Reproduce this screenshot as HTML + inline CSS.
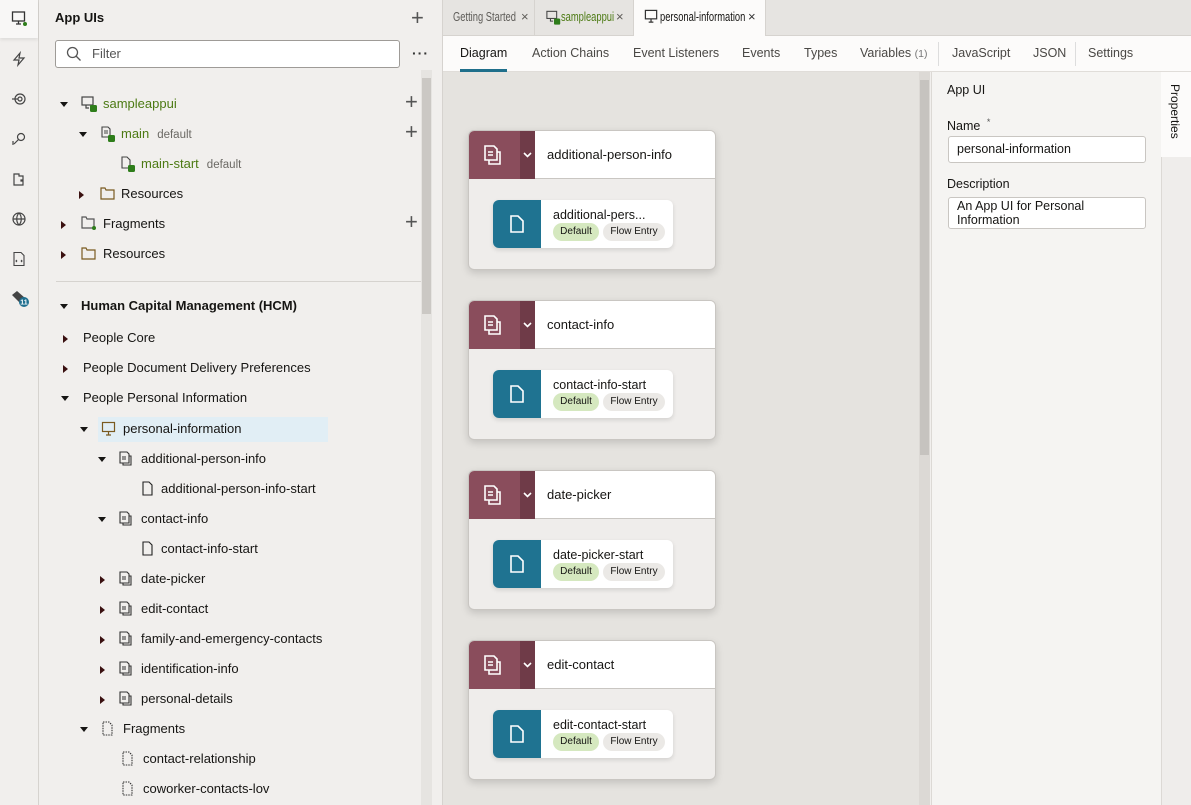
<!DOCTYPE html>
<html><head><meta charset="utf-8"><style>
*{box-sizing:border-box;margin:0;padding:0}
body{width:1191px;height:805px;overflow:hidden;font-family:"Liberation Sans",sans-serif;font-size:13px;color:#161513;background:#f1efed;position:relative}
.abs{position:absolute}
.rail{left:0;top:0;width:39px;height:805px;background:#f1efed;border-right:1px solid #d6d3cf}
.rail .ic{position:absolute;left:11px;width:16px;height:16px}
.tree{left:39px;top:0;width:404px;height:805px;background:#f1efed;border-right:1px solid #d6d3cf}
.row{position:absolute;height:22px;line-height:22px;white-space:nowrap;font-size:13px;color:#161513}
.tri{display:inline-block;width:0;height:0;border-left:4px solid transparent;border-right:4px solid transparent;border-top:5px solid #161513;vertical-align:middle}
.tri.r{border-top:4px solid transparent;border-bottom:4px solid transparent;border-left:5px solid #3a1010;border-right:0}
.plus{position:absolute;font-size:22px;color:#555;font-weight:300;line-height:20px}
.g{color:#4c7a13}
.sub{color:#6b6964;font-size:11.5px;margin-left:8px}
.tabs{left:443px;top:0;width:748px;height:36px;background:#e6e4e1;border-bottom:1px solid #d6d3cf}
.tab{position:absolute;top:0;height:36px;border-right:1px solid #d6d3cf}
.tl{position:absolute;top:0;line-height:34px;font-size:13px;color:#5e5c58;white-space:nowrap;transform:scaleX(.72);transform-origin:0 50%}
.tx{position:absolute;top:0;line-height:34px;font-size:13px;color:#5e5c58}
.subtabs{left:443px;top:36px;width:748px;height:36px;background:#fcfbfa;border-bottom:1px solid #e0ddd9}
.st{position:absolute;top:0;line-height:35px;font-size:12.5px;color:#4a4845;white-space:nowrap}
.canvas{left:443px;top:72px;width:477px;height:733px;background:#e5e3df}
.card{position:absolute;left:25px;width:248px;height:140px;background:#efedeb;border:1px solid #c9c6c2;border-radius:6px;box-shadow:0 3px 8px rgba(0,0,0,.15);overflow:hidden}
.ch{position:absolute;left:0;top:0;width:100%;height:48px;background:#fff;border-bottom:1px solid #c9c6c2}
.mar{position:absolute;left:0;top:0;width:51px;height:48px;background:#8a4d5c}
.chev{position:absolute;left:51px;top:0;width:15px;height:48px;background:#6f3b48}
.ct{position:absolute;left:78px;top:0;line-height:48px;font-size:13px;white-space:nowrap}
.inner{position:absolute;left:24px;top:69px;width:180px;height:48px;background:#fff;border-radius:6px;box-shadow:0 2px 5px rgba(0,0,0,.12);overflow:hidden}
.teal{position:absolute;left:0;top:0;width:48px;height:48px;background:#1f7391}
.it{position:absolute;left:60px;top:8px;font-size:12.5px;white-space:nowrap}
.pill{position:absolute;top:23px;height:18px;line-height:18px;font-size:10px;border-radius:9px;text-align:center}
.props{left:931px;top:72px;width:230px;height:733px;background:#f5f4f2;border-left:1px solid #dcd9d5}
.inp{position:absolute;left:16px;width:198px;background:#fff;border:1px solid #c9c6c2;border-radius:3px;font-size:13px;padding:0 8px}
</style></head><body>

<div class="abs rail">
  <div class="abs" style="left:0;top:0;width:38px;height:38px;background:#f8f7f6;box-shadow:0 2px 3px rgba(0,0,0,.08)"></div>
  <svg class="ic" style="top:10px" viewBox="0 0 16 16" fill="none" stroke="#333" stroke-width="1.3"><rect x="1.5" y="2" width="12" height="9"/><path d="M7.5 11v3M5 14h5"/><circle cx="14" cy="14" r="2" fill="#2e7d1a" stroke="none"/></svg>
  <svg class="ic" style="top:51px" viewBox="0 0 16 16" fill="none" stroke="#444" stroke-width="1.2"><path d="M9 2L3 9h5l-1 5 6-7H8z"/></svg>
  <svg class="ic" style="top:91px" viewBox="0 0 16 16" fill="none" stroke="#444" stroke-width="1.2"><circle cx="9" cy="8" r="5"/><circle cx="9" cy="8" r="2"/><path d="M1 8h6"/></svg>
  <svg class="ic" style="top:131px" viewBox="0 0 16 16" fill="none" stroke="#444" stroke-width="1.2"><circle cx="10" cy="6" r="3.5"/><path d="M7.5 8.5L3 13M2 10v4"/></svg>
  <svg class="ic" style="top:171px" viewBox="0 0 16 16" fill="none" stroke="#444" stroke-width="1.2"><path d="M3 3h5v2h4v4h-2v1h2v4H3z"/></svg>
  <svg class="ic" style="top:211px" viewBox="0 0 16 16" fill="none" stroke="#444" stroke-width="1.2"><circle cx="8" cy="8" r="6"/><path d="M2 8h12M8 2c-3 3-3 9 0 12M8 2c3 3 3 9 0 12"/></svg>
  <svg class="ic" style="top:251px" viewBox="0 0 16 16" fill="none" stroke="#444" stroke-width="1.1"><path d="M3 1.5h7l3 3v10H3z"/><path d="M6 9l-1 1 1 1M10 9l1 1-1 1"/></svg>
  <svg class="abs" style="left:10px;top:290px" width="22" height="18" viewBox="0 0 22 18"><path d="M2 5l5-4 8 7-5 5z" fill="#444"/><circle cx="14" cy="12" r="5" fill="#1f6f8f"/><text x="14" y="14.5" font-size="7" fill="#fff" text-anchor="middle" font-family="Liberation Sans" font-weight="bold">11</text></svg>
</div>

<div class="abs tree">
  <div class="abs" style="left:16px;top:10px;font-weight:bold;font-size:13px">App UIs</div>
  <div class="plus" style="left:372px;top:8px">+</div>
  <div class="abs" style="left:16px;top:40px;width:345px;height:28px;background:#fff;border:1px solid #9e9b97;border-radius:3px">
    <svg class="abs" style="left:10px;top:5px" width="16" height="16" viewBox="0 0 16 16" fill="none" stroke="#555" stroke-width="1.3"><circle cx="6.5" cy="6.5" r="5"/><path d="M10 10l4.5 4.5"/></svg>
    <span class="abs" style="left:36px;top:5px;color:#555">Filter</span>
  </div>
  <div class="abs" style="left:373px;top:45px;font-size:14px;letter-spacing:1px;color:#333;font-weight:bold">···</div>
  <div class="abs" style="left:382px;top:70px;width:11px;height:735px;background:#e6e4e1"></div>
  <div class="abs" style="left:383px;top:78px;width:9px;height:236px;background:#cbc8c4"></div>

  <div class="row" style="left:21px;top:93px"><span class="tri"></span></div>
  <svg class="abs" style="left:42px;top:96px" width="18" height="17" viewBox="0 0 18 17" fill="none" stroke="#444" stroke-width="1.2"><rect x="1" y="1" width="11" height="8"/><path d="M5 9v3h3"/><rect x="9" y="9" width="7" height="7" rx="1.5" fill="#2e7d1a" stroke="none"/></svg>
  <div class="row g" style="left:64px;top:93px">sampleappui</div>
  <div class="plus" style="left:366px;top:92px">+</div>

  <div class="row" style="left:40px;top:123px"><span class="tri"></span></div>
  <svg class="abs" style="left:61px;top:126px" width="17" height="17" viewBox="0 0 17 17" fill="none" stroke="#444" stroke-width="1.1"><path d="M2 1h6l2 2v8H2zM4 5h4M4 7h4"/><rect x="8" y="9" width="7" height="7" rx="1.5" fill="#2e7d1a" stroke="none"/></svg>
  <div class="row" style="left:82px;top:123px"><span class="g">main</span><span class="sub">default</span></div>
  <div class="plus" style="left:366px;top:122px">+</div>

  <svg class="abs" style="left:81px;top:156px" width="17" height="17" viewBox="0 0 17 17" fill="none" stroke="#444" stroke-width="1.1"><path d="M2 1h5l3 3v8H2z"/><rect x="8" y="9" width="7" height="7" rx="1.5" fill="#2e7d1a" stroke="none"/></svg>
  <div class="row" style="left:102px;top:153px"><span class="g">main-start</span><span class="sub">default</span></div>

  <div class="row" style="left:40px;top:183px"><span class="tri r"></span></div>
  <svg class="abs" style="left:61px;top:187px" width="15" height="13" viewBox="0 0 15 13" fill="none" stroke="#7a5a20" stroke-width="1.2"><path d="M1 1h4l1 2h8v9H1z"/></svg>
  <div class="row" style="left:82px;top:183px">Resources</div>

  <div class="row" style="left:22px;top:213px"><span class="tri r"></span></div>
  <svg class="abs" style="left:42px;top:216px" width="16" height="15" viewBox="0 0 16 15" fill="none" stroke="#555" stroke-width="1.2"><path d="M1 1h4l1 2h7v9H1z"/><circle cx="13" cy="12" r="2" fill="#2e7d1a" stroke="none"/></svg>
  <div class="row" style="left:64px;top:213px">Fragments</div>
  <div class="plus" style="left:366px;top:212px">+</div>

  <div class="row" style="left:22px;top:243px"><span class="tri r"></span></div>
  <svg class="abs" style="left:42px;top:247px" width="15" height="13" viewBox="0 0 15 13" fill="none" stroke="#7a5a20" stroke-width="1.2"><path d="M1 1h4l1 2h8v9H1z"/></svg>
  <div class="row" style="left:64px;top:243px">Resources</div>

  <div class="abs" style="left:17px;top:281px;width:365px;height:1px;background:#d6d3cf"></div>

  <div class="row" style="left:21px;top:295px"><span class="tri"></span></div>
  <div class="row" style="left:42px;top:295px;font-weight:bold">Human Capital Management (HCM)</div>
  <div class="row" style="left:24px;top:327px"><span class="tri r"></span></div>
  <div class="row" style="left:44px;top:327px">People Core</div>
  <div class="row" style="left:24px;top:357px"><span class="tri r"></span></div>
  <div class="row" style="left:44px;top:357px">People Document Delivery Preferences</div>
  <div class="row" style="left:22px;top:387px"><span class="tri"></span></div>
  <div class="row" style="left:44px;top:387px">People Personal Information</div>

  <div class="abs" style="left:59px;top:417px;width:230px;height:25px;background:#e1eef5"></div>
  <div class="row" style="left:41px;top:418px"><span class="tri"></span></div>
  <svg class="abs" style="left:62px;top:421px" width="16" height="16" viewBox="0 0 16 16" fill="none" stroke="#7a5a20" stroke-width="1.2"><rect x="1.5" y="1.5" width="12" height="9"/><path d="M7.5 10.5v3M5 14h5"/></svg>
  <div class="row" style="left:84px;top:418px">personal-information</div>

  <div class="row" style="left:59px;top:448px"><span class="tri"></span></div>
  <svg class="abs" style="left:80px;top:451px" width="14" height="16" viewBox="0 0 14 16" fill="none" stroke="#333" stroke-width="1.1"><path d="M1 1h7l2 2v9H1zM3 6h4M3 8h4M4 12v2h8V5h-2"/></svg>
  <div class="row" style="left:102px;top:448px">additional-person-info</div>
  <svg class="abs" style="left:103px;top:481px" width="12" height="15" viewBox="0 0 12 15" fill="none" stroke="#222" stroke-width="1.1"><path d="M1 1h6l3 3v10H1z"/></svg>
  <div class="row" style="left:122px;top:478px">additional-person-info-start</div>

  <div class="row" style="left:59px;top:508px"><span class="tri"></span></div>
  <svg class="abs" style="left:80px;top:511px" width="14" height="16" viewBox="0 0 14 16" fill="none" stroke="#333" stroke-width="1.1"><path d="M1 1h7l2 2v9H1zM3 6h4M3 8h4M4 12v2h8V5h-2"/></svg>
  <div class="row" style="left:102px;top:508px">contact-info</div>
  <svg class="abs" style="left:103px;top:541px" width="12" height="15" viewBox="0 0 12 15" fill="none" stroke="#222" stroke-width="1.1"><path d="M1 1h6l3 3v10H1z"/></svg>
  <div class="row" style="left:122px;top:538px">contact-info-start</div>

  <div class="row" style="left:61px;top:568px"><span class="tri r"></span></div>
  <svg class="abs" style="left:80px;top:571px" width="14" height="16" viewBox="0 0 14 16" fill="none" stroke="#333" stroke-width="1.1"><path d="M1 1h7l2 2v9H1zM3 6h4M3 8h4M4 12v2h8V5h-2"/></svg>
  <div class="row" style="left:102px;top:568px">date-picker</div>
  <div class="row" style="left:61px;top:598px"><span class="tri r"></span></div>
  <svg class="abs" style="left:80px;top:601px" width="14" height="16" viewBox="0 0 14 16" fill="none" stroke="#333" stroke-width="1.1"><path d="M1 1h7l2 2v9H1zM3 6h4M3 8h4M4 12v2h8V5h-2"/></svg>
  <div class="row" style="left:102px;top:598px">edit-contact</div>
  <div class="row" style="left:61px;top:628px"><span class="tri r"></span></div>
  <svg class="abs" style="left:80px;top:631px" width="14" height="16" viewBox="0 0 14 16" fill="none" stroke="#333" stroke-width="1.1"><path d="M1 1h7l2 2v9H1zM3 6h4M3 8h4M4 12v2h8V5h-2"/></svg>
  <div class="row" style="left:102px;top:628px">family-and-emergency-contacts</div>
  <div class="row" style="left:61px;top:658px"><span class="tri r"></span></div>
  <svg class="abs" style="left:80px;top:661px" width="14" height="16" viewBox="0 0 14 16" fill="none" stroke="#333" stroke-width="1.1"><path d="M1 1h7l2 2v9H1zM3 6h4M3 8h4M4 12v2h8V5h-2"/></svg>
  <div class="row" style="left:102px;top:658px">identification-info</div>
  <div class="row" style="left:61px;top:688px"><span class="tri r"></span></div>
  <svg class="abs" style="left:80px;top:691px" width="14" height="16" viewBox="0 0 14 16" fill="none" stroke="#333" stroke-width="1.1"><path d="M1 1h7l2 2v9H1zM3 6h4M3 8h4M4 12v2h8V5h-2"/></svg>
  <div class="row" style="left:102px;top:688px">personal-details</div>

  <div class="row" style="left:41px;top:718px"><span class="tri"></span></div>
  <svg class="abs" style="left:63px;top:721px" width="12" height="15" viewBox="0 0 12 15" fill="none" stroke="#333" stroke-width="1.1" stroke-dasharray="1.5 1"><path d="M1 1h6l3 3v10H1z"/></svg>
  <div class="row" style="left:84px;top:718px">Fragments</div>
  <svg class="abs" style="left:83px;top:751px" width="12" height="15" viewBox="0 0 12 15" fill="none" stroke="#333" stroke-width="1.1" stroke-dasharray="1.5 1"><path d="M1 1h6l3 3v10H1z"/></svg>
  <div class="row" style="left:104px;top:748px">contact-relationship</div>
  <svg class="abs" style="left:83px;top:781px" width="12" height="15" viewBox="0 0 12 15" fill="none" stroke="#333" stroke-width="1.1" stroke-dasharray="1.5 1"><path d="M1 1h6l3 3v10H1z"/></svg>
  <div class="row" style="left:104px;top:778px">coworker-contacts-lov</div>
</div>

<div class="abs tabs">
  <div class="tab" style="left:0;width:92px">
    <span class="tl" style="left:10px;width:84px">Getting Started</span><span class="tx" style="left:78px">×</span>
  </div>
  <div class="tab" style="left:92px;width:99px">
    <svg class="abs" style="left:11px;top:10px" width="16" height="16" viewBox="0 0 18 17" fill="none" stroke="#444" stroke-width="1.2"><rect x="1" y="1" width="11" height="8"/><path d="M5 9v3h3"/><rect x="9" y="9" width="7" height="7" rx="1.5" fill="#2e7d1a" stroke="none"/></svg>
    <span class="tl g" style="left:26px;color:#4c7a13">sampleappui</span><span class="tx" style="left:81px">×</span>
  </div>
  <div class="tab" style="left:191px;width:132px;height:37px;background:#fcfbfa">
    <svg class="abs" style="left:10px;top:9px" width="15" height="15" viewBox="0 0 16 16" fill="none" stroke="#333" stroke-width="1.3"><rect x="1.5" y="1.5" width="12" height="9"/><path d="M7.5 10.5v3M5 14h5"/></svg>
    <span class="tl" style="left:26px;color:#161513">personal-information</span><span class="tx" style="left:114px;color:#333">×</span>
  </div>
</div>

<div class="abs subtabs">
  <div class="st" style="left:17px;color:#161513">Diagram</div>
  <div class="abs" style="left:17px;top:33px;width:47px;height:3px;background:#1f6f8b"></div>
  <div class="st" style="left:89px">Action Chains</div>
  <div class="st" style="left:190px">Event Listeners</div>
  <div class="st" style="left:299px">Events</div>
  <div class="st" style="left:361px">Types</div>
  <div class="st" style="left:417px">Variables <span style="font-size:10.5px;color:#777">(1)</span></div>
  <div class="abs" style="left:495px;top:6px;width:1px;height:24px;background:#ddd"></div>
  <div class="st" style="left:509px">JavaScript</div>
  <div class="st" style="left:590px">JSON</div>
  <div class="abs" style="left:632px;top:6px;width:1px;height:24px;background:#ddd"></div>
  <div class="st" style="left:645px">Settings</div>
</div>

<div class="abs canvas">
  <div class="abs" style="left:476px;top:0;width:11px;height:733px;background:#dcd9d5"></div>
  <div class="abs" style="left:477px;top:8px;width:9px;height:375px;background:#c6c3bf"></div>
  
  <div class="card" style="top:58px"><div class="ch"><div class="mar"><svg class="abs" style="left:14px;top:14px" width="20" height="20" viewBox="0 0 20 20" fill="none" stroke="#fff" stroke-width="1.6"><path d="M2 1h9l3 3v11H2zM5 7h5M5 10h5M6 15v4h11V7h-3"/></svg></div><div class="chev"><svg class="abs" style="left:3px;top:21px" width="9" height="6" viewBox="0 0 9 6" fill="none" stroke="#fff" stroke-width="1.6"><path d="M1 1l3.5 3.5L8 1"/></svg></div><div class="ct">additional-person-info</div></div>
    <div class="inner"><div class="teal"><svg class="abs" style="left:17px;top:15px" width="14" height="18" viewBox="0 0 14 18" fill="none" stroke="#fff" stroke-width="1.6"><path d="M1 1h7l5 5v11H1z"/></svg></div><div class="it">additional-pers...</div><div class="pill" style="left:60px;width:46px;background:#d5e8bf">Default</div><div class="pill" style="left:110px;width:62px;background:#ebe9e6">Flow Entry</div></div></div>

  <div class="card" style="top:228px"><div class="ch"><div class="mar"><svg class="abs" style="left:14px;top:14px" width="20" height="20" viewBox="0 0 20 20" fill="none" stroke="#fff" stroke-width="1.6"><path d="M2 1h9l3 3v11H2zM5 7h5M5 10h5M6 15v4h11V7h-3"/></svg></div><div class="chev"><svg class="abs" style="left:3px;top:21px" width="9" height="6" viewBox="0 0 9 6" fill="none" stroke="#fff" stroke-width="1.6"><path d="M1 1l3.5 3.5L8 1"/></svg></div><div class="ct">contact-info</div></div>
    <div class="inner"><div class="teal"><svg class="abs" style="left:17px;top:15px" width="14" height="18" viewBox="0 0 14 18" fill="none" stroke="#fff" stroke-width="1.6"><path d="M1 1h7l5 5v11H1z"/></svg></div><div class="it">contact-info-start</div><div class="pill" style="left:60px;width:46px;background:#d5e8bf">Default</div><div class="pill" style="left:110px;width:62px;background:#ebe9e6">Flow Entry</div></div></div>

  <div class="card" style="top:398px"><div class="ch"><div class="mar"><svg class="abs" style="left:14px;top:14px" width="20" height="20" viewBox="0 0 20 20" fill="none" stroke="#fff" stroke-width="1.6"><path d="M2 1h9l3 3v11H2zM5 7h5M5 10h5M6 15v4h11V7h-3"/></svg></div><div class="chev"><svg class="abs" style="left:3px;top:21px" width="9" height="6" viewBox="0 0 9 6" fill="none" stroke="#fff" stroke-width="1.6"><path d="M1 1l3.5 3.5L8 1"/></svg></div><div class="ct">date-picker</div></div>
    <div class="inner"><div class="teal"><svg class="abs" style="left:17px;top:15px" width="14" height="18" viewBox="0 0 14 18" fill="none" stroke="#fff" stroke-width="1.6"><path d="M1 1h7l5 5v11H1z"/></svg></div><div class="it">date-picker-start</div><div class="pill" style="left:60px;width:46px;background:#d5e8bf">Default</div><div class="pill" style="left:110px;width:62px;background:#ebe9e6">Flow Entry</div></div></div>

  <div class="card" style="top:568px"><div class="ch"><div class="mar"><svg class="abs" style="left:14px;top:14px" width="20" height="20" viewBox="0 0 20 20" fill="none" stroke="#fff" stroke-width="1.6"><path d="M2 1h9l3 3v11H2zM5 7h5M5 10h5M6 15v4h11V7h-3"/></svg></div><div class="chev"><svg class="abs" style="left:3px;top:21px" width="9" height="6" viewBox="0 0 9 6" fill="none" stroke="#fff" stroke-width="1.6"><path d="M1 1l3.5 3.5L8 1"/></svg></div><div class="ct">edit-contact</div></div>
    <div class="inner"><div class="teal"><svg class="abs" style="left:17px;top:15px" width="14" height="18" viewBox="0 0 14 18" fill="none" stroke="#fff" stroke-width="1.6"><path d="M1 1h7l5 5v11H1z"/></svg></div><div class="it">edit-contact-start</div><div class="pill" style="left:60px;width:46px;background:#d5e8bf">Default</div><div class="pill" style="left:110px;width:62px;background:#ebe9e6">Flow Entry</div></div></div>
</div>

<div class="abs props">
  <div class="abs" style="left:15px;top:11px;font-size:12.5px">App UI</div>
  <div class="abs" style="left:15px;top:45px;font-size:12.5px">Name <span style="font-size:9px;color:#555;vertical-align:5px;margin-left:3px">*</span></div>
  <div class="inp" style="top:64px;height:27px;line-height:25px;font-size:12.5px">personal-information</div>
  <div class="abs" style="left:15px;top:105px;font-size:12.5px">Description</div>
  <div class="inp" style="top:125px;height:32px;line-height:14px;padding-top:1px;font-size:12.5px">An App UI for Personal Information</div>
</div>
<div class="abs" style="left:1161px;top:72px;width:30px;height:85px;background:#fcfbfa"></div>
<div class="abs" style="left:1161px;top:157px;width:30px;height:648px;background:#efedeb;border-left:1px solid #dcd9d5"></div>
<div class="abs" style="left:1168px;top:84px;writing-mode:vertical-rl;font-size:12px;color:#161513">Properties</div>

</body></html>
